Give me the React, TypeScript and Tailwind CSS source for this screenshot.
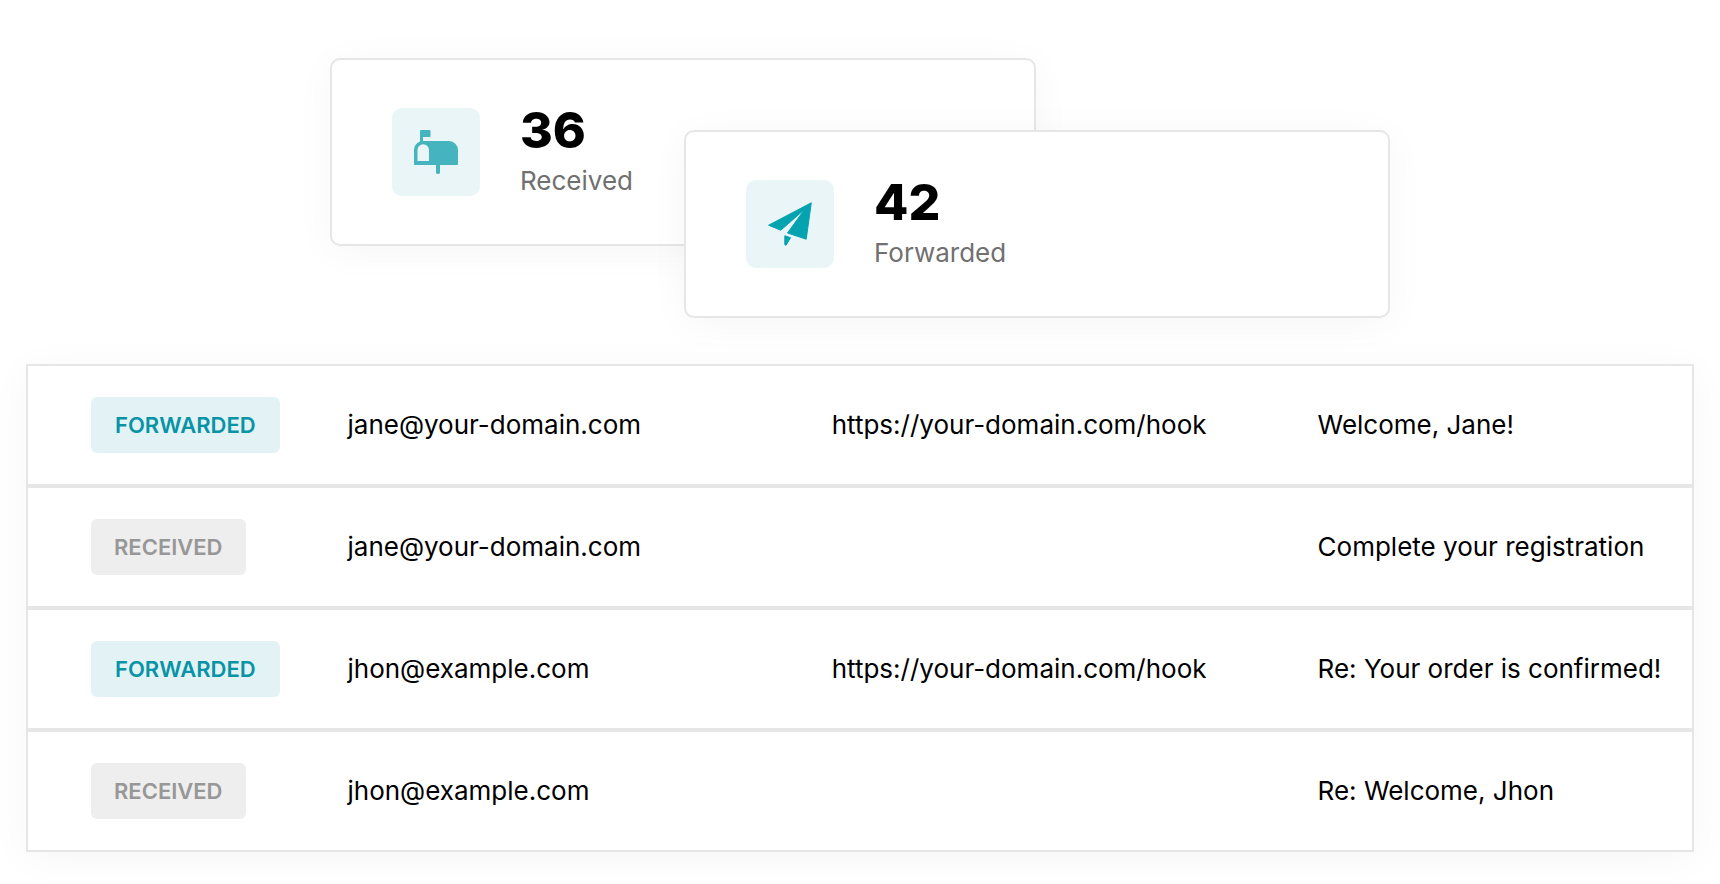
import type { ReactNode } from "react";

type Status = "Forwarded" | "Received";

interface Message {
  status: Status;
  address: string;
  hook?: string;
  subject: string;
}

const messages: Message[] = [
  { status: "Forwarded", address: "jane@your-domain.com", hook: "https://your-domain.com/hook", subject: "Welcome, Jane!" },
  { status: "Received", address: "jane@your-domain.com", subject: "Complete your registration" },
  { status: "Forwarded", address: "jhon@example.com", hook: "https://your-domain.com/hook", subject: "Re: Your order is confirmed!" },
  { status: "Received", address: "jhon@example.com", subject: "Re: Welcome, Jhon" },
];

function MailboxIcon() {
  return (
    <svg viewBox="0 0 44 44" className="size-11 fill-[#45b4be]" aria-hidden="true">
      <path
        fillRule="evenodd"
        d="M7 0H15.500Q16.500 0 16.500 1V6Q16.500 7 15.500 7H9V11H35A9 9 0 0 1 44 20V34Q44 35 43 35H26V42.500Q26 44 24 44Q22 44 22 42.500V35H1Q0 35 0 34V20Q0 14 6 11.500V1Q6 0 7 0ZM3.500 31H15V20A5.750 5.750 0 0 0 3.500 20Z"
      />
    </svg>
  );
}

function PlaneIcon() {
  return (
    <svg
      viewBox="0 0 44 44"
      className="size-11 fill-[#05a3b0] stroke-[#05a3b0] stroke-1"
      strokeLinejoin="round"
      aria-hidden="true"
    >
      <path d="M43.300 .8 .6 23.200 12.800 28.200 36.500 7.500 19.500 31 38.200 37.200Z" />
      <path d="M16.800 33.800 22.500 35.700 18.200 43Q17 43.500 16.800 42.500Z" />
    </svg>
  );
}

function StatCard({ icon, value, label, className }: { icon: ReactNode; value: number; label: string; className?: string }) {
  return (
    <section
      className={`flex w-[706px] items-start gap-10 rounded-[10px] border-2 border-[#e6e6e6] bg-white px-[60px] py-12 shadow-[0_6px_40px_rgba(0,0,0,0.04)] ${className ?? ""}`}
    >
      <div className="flex size-[88px] items-center justify-center rounded-[10px] bg-[#e9f5f7]">{icon}</div>
      <div>
        <p className="text-[50px] leading-[44px] font-extrabold text-black">{value}</p>
        <p className="mt-[14px] text-[26px] leading-[30px] text-[#707070]">{label}</p>
      </div>
    </section>
  );
}

function Badge({ status }: { status: Status }) {
  const tone = status === "Forwarded" ? "bg-[#e3f3f5] px-6 text-[#0893a6]" : "bg-[#eeeeee] px-[23px] text-[#979797]";
  return (
    <span className={`inline-block rounded-md align-middle text-[22px] leading-[56px] font-semibold uppercase ${tone}`}>
      {status}
    </span>
  );
}

export default function App() {
  return (
    <main className="bg-white px-[26px] pt-[58px] pb-8 font-[Inter,sans-serif] [font-optical-sizing:none]">
      <div className="flex items-start justify-center">
        <StatCard icon={<MailboxIcon />} value={36} label="Received" />
        <StatCard icon={<PlaneIcon />} value={42} label="Forwarded" className="relative mt-[72px] -ml-[352px]" />
      </div>
      <table
        aria-label="Messages"
        className="mt-[46px] w-full table-fixed border-separate border-spacing-0 border-x-2 border-[#e6e6e6] bg-white text-left text-[26px] leading-8 whitespace-nowrap text-black shadow-[0_6px_40px_rgba(0,0,0,0.04)]"
      >
        <colgroup>
          <col className="w-[19.2%]" />
          <col className="w-[29.1%]" />
          <col className="w-[29.2%]" />
          <col />
        </colgroup>
        <tbody>
          {messages.map((message, index) => (
            <tr key={index}>
              <td className="h-[122px] border-y-2 border-[#e6e6e6] py-0 pl-[63px]">
                <Badge status={message.status} />
              </td>
              <td className="border-y-2 border-[#e6e6e6]">{message.address}</td>
              <td className="border-y-2 border-[#e6e6e6]">{message.hook}</td>
              <td className="border-y-2 border-[#e6e6e6]">{message.subject}</td>
            </tr>
          ))}
        </tbody>
      </table>
    </main>
  );
}
